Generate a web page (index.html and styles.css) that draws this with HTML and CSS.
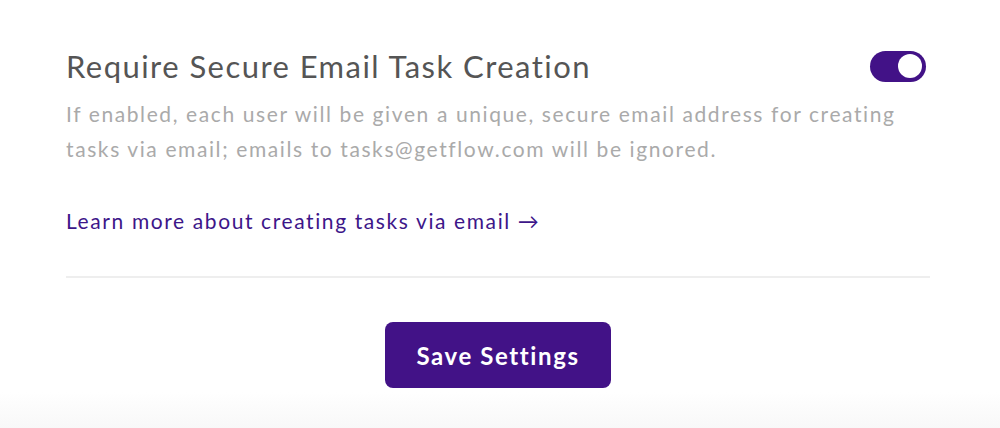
FILE: index.html
```html
<!DOCTYPE html>
<html lang="en">
<head>
    <meta charset="UTF-8">
    <title>Settings</title>
    <link rel="stylesheet" href="styles.css">
</head>
<body>
    <div class="page">
        <div class="setting">
            <div class="setting-head">
                <h2 class="setting-title">Require Secure Email Task Creation</h2>
                <label class="switch">
                    <input type="checkbox" checked>
                    <span class="slider"></span>
                </label>
            </div>
            <p class="setting-desc">If enabled, each user will be given a unique, secure email address for creating tasks via email; emails to tasks@getflow.com will be ignored.</p>
            <a class="setting-link" href="#">Learn more about creating tasks via email &rarr;</a>
        </div>
        <div class="actions">
            <button class="save-button">Save Settings</button>
        </div>
    </div>
</body>
</html>
```
FILE: styles.css
```css
* { margin: 0; padding: 0; box-sizing: border-box; font-family: Lato, "Noto Sans", sans-serif; }
body { background: linear-gradient(to bottom, #fff 0, #fff 392px, #f8f8f8 428px); min-height: 100vh; }

.page { padding: 45px 70px 0 66px; }

.setting { border-bottom: 2px solid #eeeeee; padding-bottom: 43px; }
.setting-head { display: flex; justify-content: space-between; align-items: center; }
.setting-title { font-size: 31px; font-weight: 400; color: #555; line-height: 42px; letter-spacing: 1.45px; }
.setting-desc { font-size: 21px; color: #aaa; line-height: 35px; margin-top: 9px; max-width: 850px; letter-spacing: 1.6px; }
.setting-link { display: inline-block; margin-top: 42px; font-size: 21px; color: #3d1689; text-decoration: none; letter-spacing: 1.6px; }

.actions { display: flex; justify-content: center; padding-top: 44px; }
.save-button {
    background-color: #421287;
    color: #fff;
    border: none;
    border-radius: 8px;
    width: 226px;
    height: 66px;
    font-size: 24px;
    font-weight: 700;
    letter-spacing: 1.6px;
    cursor: pointer;
}

/* Toggle */
.switch { position: relative; display: inline-block; width: 56px; height: 31px; margin-right: 4px; }
.switch input { opacity: 0; width: 0; height: 0; }
.slider { position: absolute; inset: 0; background-color: #421287; border-radius: 16px; }
.slider:before { position: absolute; content: ""; width: 24px; height: 24px; border-radius: 50%; background-color: #fff; left: 4px; top: 3.5px; }
input:checked + .slider:before { transform: translateX(24px); }
```
